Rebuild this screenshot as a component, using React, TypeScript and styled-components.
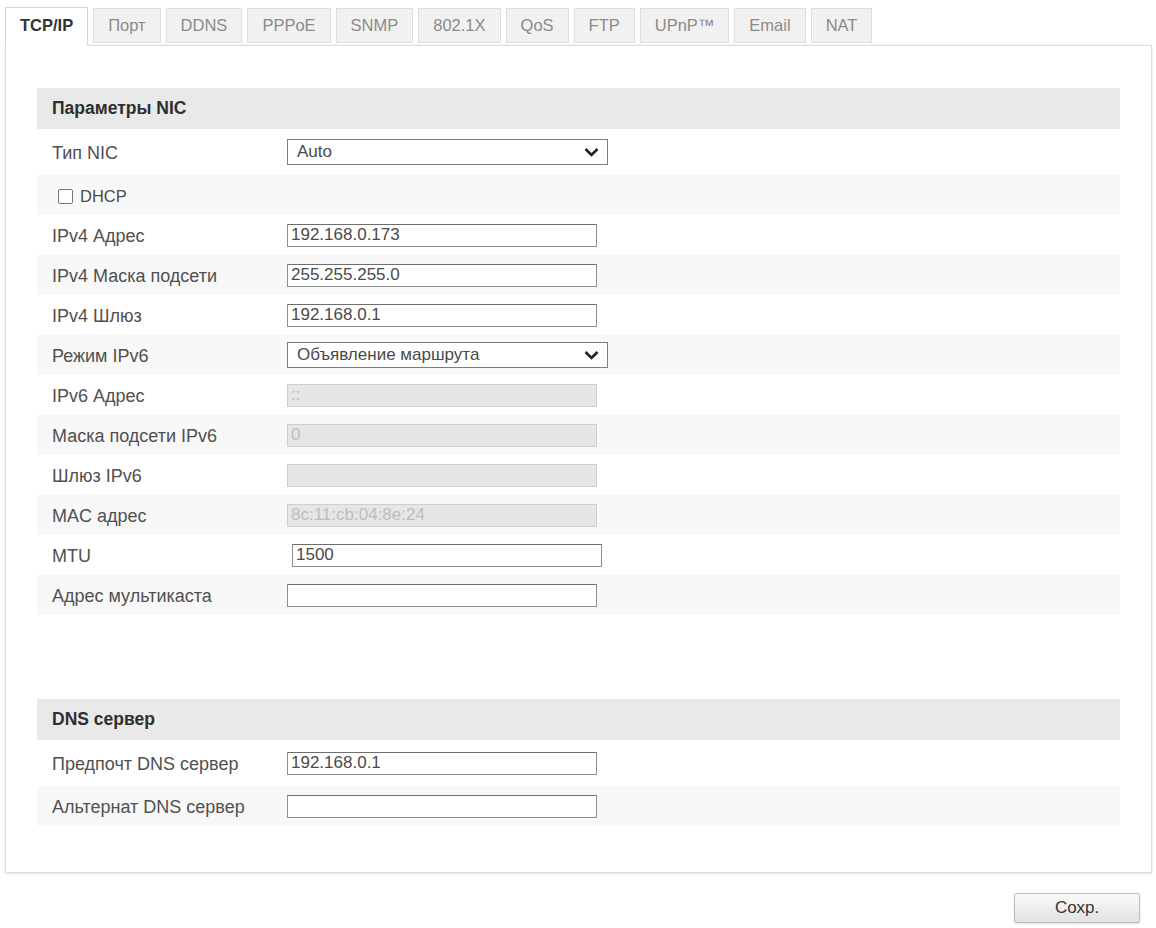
import React from 'react';
import styled, { createGlobalStyle } from 'styled-components';

const GlobalStyle = createGlobalStyle`
	html, body {
		margin: 0;
		padding: 0;
		background: #ffffff;
		font-family: "Liberation Sans", Arial, sans-serif;
	}
`;

const Page = styled.div`
	width: 1156px;
	height: 928px;
	box-sizing: border-box;
	padding: 7px 4px 0 5px;
	overflow: hidden;
`;

const TabBar = styled.div`
	display: flex;
	align-items: flex-start;
	gap: 5px;
	position: relative;
	z-index: 1;
	margin-bottom: -1px;
`;

const Tab = styled.div<{ $active?: boolean }>`
	box-sizing: border-box;
	display: flex;
	align-items: center;
	justify-content: center;
	padding: ${p => (p.$active ? '0 14px 3px' : '0 14px')};
	margin-top: ${p => (p.$active ? '0' : '1px')};
	height: ${p => (p.$active ? '39px' : '35px')};
	font-size: 16.5px;
	color: ${p => (p.$active ? '#333' : '#8a8a8a')};
	font-weight: ${p => (p.$active ? 700 : 400)};
	background: ${p => (p.$active ? '#fff' : '#f1f1f1')};
	border: 1px solid ${p => (p.$active ? '#d6d6d6' : '#dedede')};
	border-bottom-color: ${p => (p.$active ? '#fff' : '#dedede')};
	cursor: default;
`;

const Panel = styled.div`
	border: 1px solid #dcdcdc;
	box-shadow: 0 1px 3px rgba(0, 0, 0, 0.12);
	padding: 42px 31px 46px 31px;
	background: #fff;
`;

const Section = styled.div`
	& + & {
		margin-top: 84px;
	}
`;

const SectionHeader = styled.div`
	height: 41px;
	display: flex;
	align-items: center;
	padding-left: 15px;
	background: #e9e9e9;
	font-size: 17.5px;
	font-weight: 700;
	color: #2f2f2f;
`;

const Row = styled.div<{ $tall?: boolean }>`
	display: flex;
	align-items: center;
	height: ${p => (p.$tall ? '46px' : '40px')};
	padding-left: 15px;
	&:nth-child(even) {
		background: #f8f8f8;
	}
`;

const Label = styled.div`
	width: 235px;
	flex-shrink: 0;
	padding-top: 2px;
	font-size: 18px;
	color: #505050;
`;

const TextInput = styled.input<{ $shift?: number }>`
	width: 310px;
	height: 23px;
	box-sizing: border-box;
	margin-left: ${p => p.$shift || 0}px;
	border: 1px solid #8f8f8f;
	border-top-color: #6e6e6e;
	padding: 0 3px;
	font-family: inherit;
	font-size: 17px;
	color: #4a4a4a;
	background: #fff;
	outline: none;
	&:disabled {
		background: #e6e6e6;
		border-color: #cfcfcf;
		color: #bdbdbd;
	}
`;

const SelectBox = styled.div`
	width: 321px;
	height: 26px;
	box-sizing: border-box;
	border: 1px solid #7d7d7d;
	display: flex;
	align-items: center;
	justify-content: space-between;
	padding: 0 8px 0 9px;
	font-size: 17px;
	color: #4a4a4a;
	background: #fff;
`;

const Check = styled.span`
	width: 15px;
	height: 15px;
	box-sizing: border-box;
	border: 1px solid #777;
	border-radius: 2px;
	margin: 2px 7px 0 6px;
	background: #fff;
`;

const CheckText = styled.span`
	padding-top: 3px;
	font-size: 16.5px;
	color: #4a4a4a;
`;

const Footer = styled.div`
	display: flex;
	justify-content: flex-end;
	padding: 20px 12px 0 0;
`;

const SaveButton = styled.button`
	width: 126px;
	height: 30px;
	border: 1px solid #bdbdbd;
	border-radius: 2px;
	background: linear-gradient(#fafafa, #e2e2e2);
	box-shadow: 0 1px 2px rgba(0, 0, 0, 0.12);
	font-family: inherit;
	font-size: 17px;
	color: #333;
`;

const Chevron = () => (
	<svg width="15" height="10" viewBox="0 0 15 10">
		<path d="M1.5 2 L7.5 8 L13.5 2" fill="none" stroke="#222" strokeWidth="2.6" />
	</svg>
);

const tabs = ['TCP/IP', 'Порт', 'DDNS', 'PPPoE', 'SNMP', '802.1X', 'QoS', 'FTP', 'UPnP™', 'Email', 'NAT'];

type Field =
	| { kind: 'select'; label: string; value: string }
	| { kind: 'check'; label: string }
	| { kind: 'input'; label: string; value: string; disabled?: boolean; shift?: number };

const nicFields: Field[] = [
	{ kind: 'select', label: 'Тип NIC', value: 'Auto' },
	{ kind: 'check', label: 'DHCP' },
	{ kind: 'input', label: 'IPv4 Адрес', value: '192.168.0.173' },
	{ kind: 'input', label: 'IPv4 Маска подсети', value: '255.255.255.0' },
	{ kind: 'input', label: 'IPv4 Шлюз', value: '192.168.0.1' },
	{ kind: 'select', label: 'Режим IPv6', value: 'Объявление маршрута' },
	{ kind: 'input', label: 'IPv6 Адрес', value: '::', disabled: true },
	{ kind: 'input', label: 'Маска подсети IPv6', value: '0', disabled: true },
	{ kind: 'input', label: 'Шлюз IPv6', value: '', disabled: true },
	{ kind: 'input', label: 'MAC адрес', value: '8c:11:cb:04:8e:24', disabled: true },
	{ kind: 'input', label: 'MTU', value: '1500', shift: 5 },
	{ kind: 'input', label: 'Адрес мультикаста', value: '' },
];

const dnsFields: Field[] = [
	{ kind: 'input', label: 'Предпочт DNS сервер', value: '192.168.0.1' },
	{ kind: 'input', label: 'Альтернат DNS сервер', value: '' },
];

function renderField(f: Field, i: number) {
	if (f.kind === 'check') {
		return (
			<Row key={f.label}>
				<Check />
				<CheckText>{f.label}</CheckText>
			</Row>
		);
	}
	return (
		<Row key={f.label} $tall={i === 0}>
			<Label>{f.label}</Label>
			{f.kind === 'select' ? (
				<SelectBox>
					<span>{f.value}</span>
					<Chevron />
				</SelectBox>
			) : (
				<TextInput defaultValue={f.value} disabled={f.disabled} $shift={f.shift} readOnly={!f.disabled} />
			)}
		</Row>
	);
}

export default function App() {
	return (
		<Page>
			<GlobalStyle />
			<TabBar>
				{tabs.map((t, i) => (
					<Tab key={t} $active={i === 0}>{t}</Tab>
				))}
			</TabBar>
			<Panel>
				<Section>
					<SectionHeader>Параметры NIC</SectionHeader>
					<div>{nicFields.map(renderField)}</div>
				</Section>
				<Section>
					<SectionHeader>DNS сервер</SectionHeader>
					<div>{dnsFields.map(renderField)}</div>
				</Section>
			</Panel>
			<Footer>
				<SaveButton>Сохр.</SaveButton>
			</Footer>
		</Page>
	);
}
